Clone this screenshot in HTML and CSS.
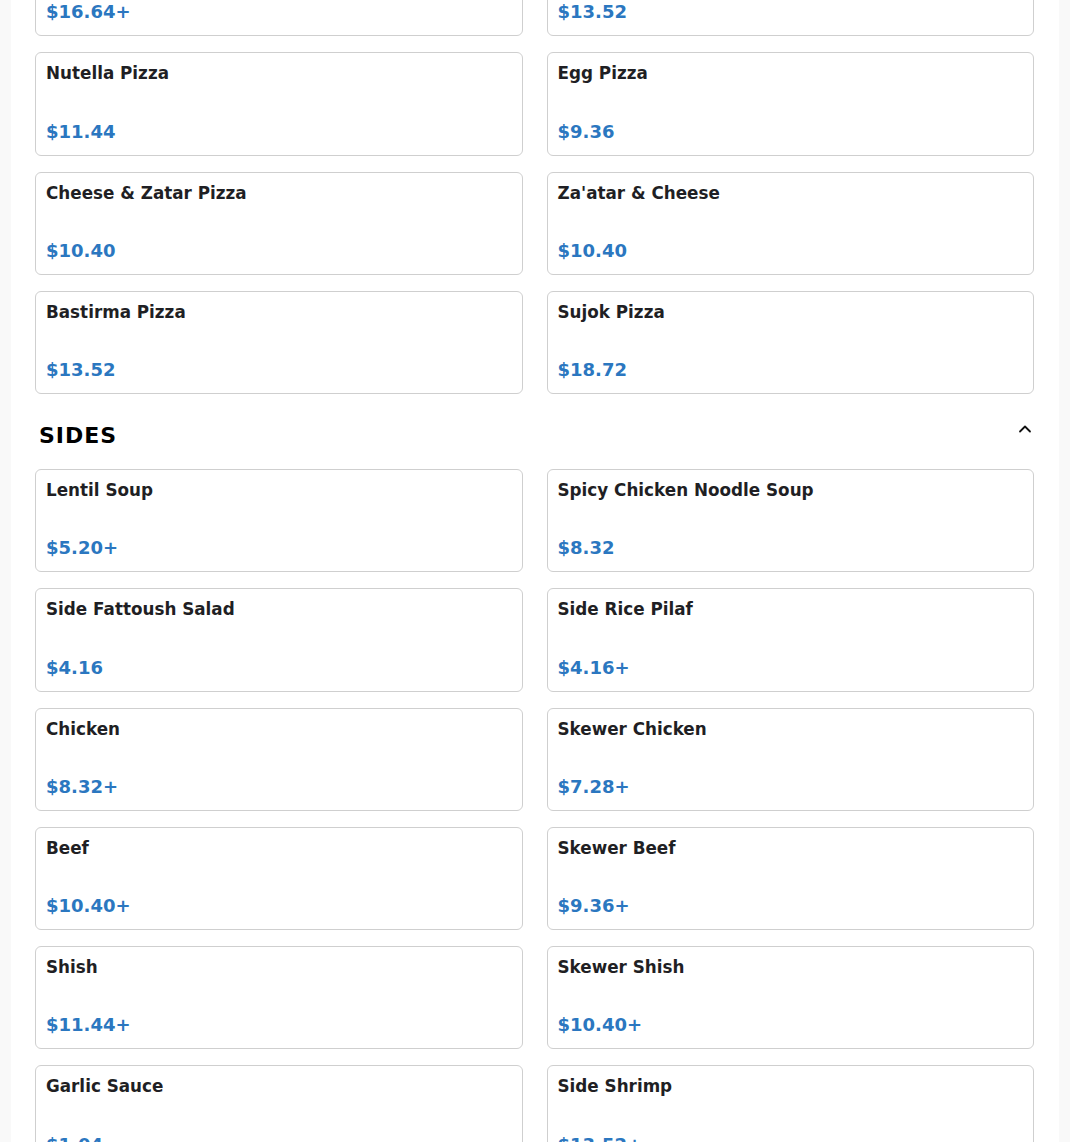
FILE: index.html
```html
<!DOCTYPE html>
<html lang="en">
<head>
<meta charset="utf-8">
<title>Menu</title>
<link rel="stylesheet" href="styles.css">
</head>
<body>
<main class="page">
  <section class="section section-pizza">
    <div class="grid">
      <div class="card"><h3 class="name">Vegetable Pizza</h3><div class="price">$16.64+</div></div>
      <div class="card"><h3 class="name">Chicken Pizza</h3><div class="price">$13.52</div></div>
      <div class="card"><h3 class="name">Nutella Pizza</h3><div class="price">$11.44</div></div>
      <div class="card"><h3 class="name">Egg Pizza</h3><div class="price">$9.36</div></div>
      <div class="card"><h3 class="name">Cheese &amp; Zatar Pizza</h3><div class="price">$10.40</div></div>
      <div class="card"><h3 class="name">Za'atar &amp; Cheese</h3><div class="price">$10.40</div></div>
      <div class="card"><h3 class="name">Bastirma Pizza</h3><div class="price">$13.52</div></div>
      <div class="card"><h3 class="name">Sujok Pizza</h3><div class="price">$18.72</div></div>
    </div>
  </section>
  <section class="section">
    <div class="section-head">
      <h2 class="section-title">SIDES</h2>
      <svg class="chev" width="14" height="14" viewBox="0 0 14 14" aria-hidden="true"><path d="M2 9.5 L7 4.5 L12 9.5" fill="none" stroke="#111" stroke-width="1.8" stroke-linecap="round" stroke-linejoin="round"/></svg>
    </div>
    <div class="grid">
      <div class="card"><h3 class="name">Lentil Soup</h3><div class="price">$5.20+</div></div>
      <div class="card"><h3 class="name">Spicy Chicken Noodle Soup</h3><div class="price">$8.32</div></div>
      <div class="card"><h3 class="name">Side Fattoush Salad</h3><div class="price">$4.16</div></div>
      <div class="card"><h3 class="name">Side Rice Pilaf</h3><div class="price">$4.16+</div></div>
      <div class="card"><h3 class="name">Chicken</h3><div class="price">$8.32+</div></div>
      <div class="card"><h3 class="name">Skewer Chicken</h3><div class="price">$7.28+</div></div>
      <div class="card"><h3 class="name">Beef</h3><div class="price">$10.40+</div></div>
      <div class="card"><h3 class="name">Skewer Beef</h3><div class="price">$9.36+</div></div>
      <div class="card"><h3 class="name">Shish</h3><div class="price">$11.44+</div></div>
      <div class="card"><h3 class="name">Skewer Shish</h3><div class="price">$10.40+</div></div>
      <div class="card"><h3 class="name">Garlic Sauce</h3><div class="price">$1.04</div></div>
      <div class="card"><h3 class="name">Side Shrimp</h3><div class="price">$13.52+</div></div>
    </div>
  </section>
</main>
</body>
</html>
```
FILE: styles.css
```css
html, body {
  margin: 0;
  padding: 0;
  background: #f9f9f9;
  font-family: "DejaVu Sans", sans-serif;
  overflow: hidden;
  height: 1142px;
}
.page {
  width: 999px;
  margin: -67px auto 0;
  padding: 0 25px 40px 24px;
  background: #fff;
  min-height: 1300px;
}
.grid {
  display: grid;
  grid-template-columns: 1fr 1fr;
  column-gap: 24px;
  row-gap: 16px;
}
.card {
  height: 103.25px;
  box-sizing: border-box;
  border: 1px solid #cfcfcf;
  border-radius: 6px;
  padding: 9px 10px 12px;
  display: flex;
  flex-direction: column;
  justify-content: space-between;
  background: #fff;
}
.name {
  margin: 0;
  font-size: 16.8px;
  line-height: 22px;
  font-weight: 700;
  color: #1f1f24;
}
.price {
  font-size: 18px;
  line-height: 22px;
  font-weight: 700;
  color: #2b77c0;
}
.section-head {
  display: flex;
  align-items: center;
  justify-content: space-between;
  box-sizing: border-box;
  height: 75px;
  padding: 8px 0 0 4px;
}
.section-title {
  margin: 0;
  font-size: 22px;
  letter-spacing: 1px;
  font-weight: 700;
  color: #000;
}
.chev {
  margin-right: 2px;
  margin-top: -14px;
}
```
